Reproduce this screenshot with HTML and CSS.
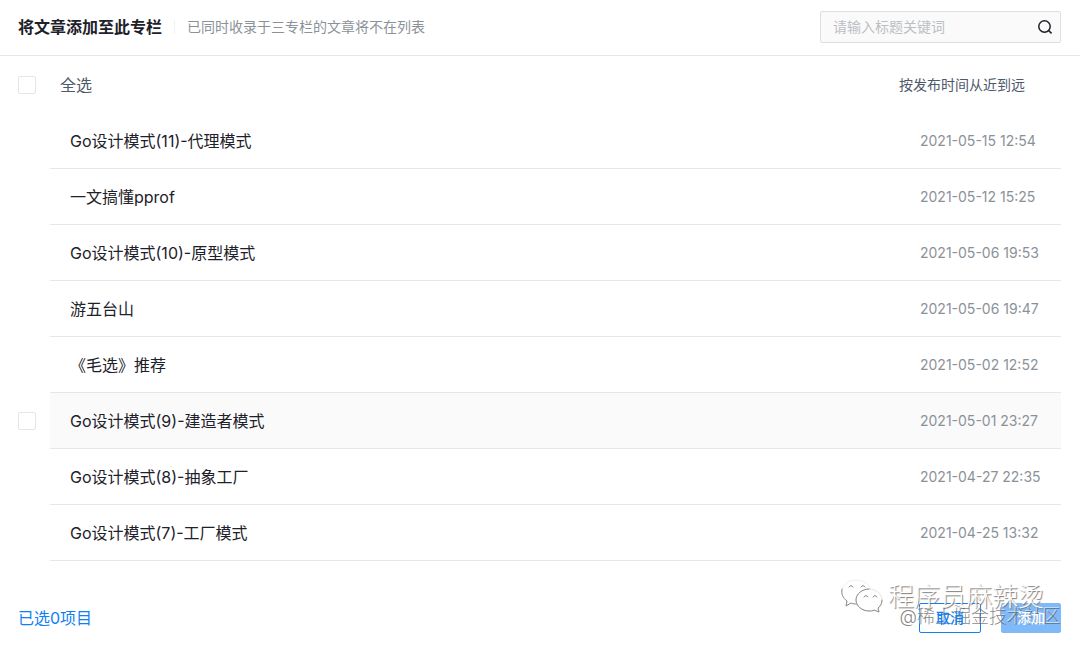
FILE: index.html
```html
<!DOCTYPE html>
<html lang="zh-CN">
<head>
<meta charset="utf-8">
<title>将文章添加至此专栏</title>
<link rel="stylesheet" href="styles.css">
</head>
<body>
<main class="dialog">
  <header class="header">
    <h1 class="title">将文章添加至此专栏</h1>
    <p class="hint">已同时收录于三专栏的文章将不在列表</p>
    <form class="search">
      <input class="search-input" type="text" placeholder="请输入标题关键词" aria-label="搜索文章">
      <button class="search-button" type="button" aria-label="搜索">
        <svg width="16" height="16" viewBox="0 0 16 16" fill="none" stroke="#1d2129" stroke-width="1.5"><circle cx="7.5" cy="7.5" r="5.7"/><path d="M11.6 11.6 14.6 14.4"/></svg>
      </button>
    </form>
  </header>
  <div class="toolbar">
    <label class="select-all"><input class="check" type="checkbox"><span>全选</span></label>
    <span class="sort">按发布时间从近到远</span>
  </div>
  <ul class="list">
    <li class="row"><div class="item"><span class="name">Go设计模式(11)-代理模式</span><time class="date">2021-05-15 12:54</time></div></li>
    <li class="row"><div class="item"><span class="name">一文搞懂pprof</span><time class="date">2021-05-12 15:25</time></div></li>
    <li class="row"><div class="item"><span class="name">Go设计模式(10)-原型模式</span><time class="date">2021-05-06 19:53</time></div></li>
    <li class="row"><div class="item"><span class="name">游五台山</span><time class="date">2021-05-06 19:47</time></div></li>
    <li class="row"><div class="item"><span class="name">《毛选》推荐</span><time class="date">2021-05-02 12:52</time></div></li>
    <li class="row row-active"><input class="check" type="checkbox" aria-label="选择 Go设计模式(9)-建造者模式"><div class="item"><span class="name">Go设计模式(9)-建造者模式</span><time class="date">2021-05-01 23:27</time></div></li>
    <li class="row"><div class="item"><span class="name">Go设计模式(8)-抽象工厂</span><time class="date">2021-04-27 22:35</time></div></li>
    <li class="row"><div class="item"><span class="name">Go设计模式(7)-工厂模式</span><time class="date">2021-04-25 13:32</time></div></li>
  </ul>
  <footer class="footer">
    <span class="count">已选0项目</span>
    <div class="actions">
      <button class="btn btn-cancel" type="button"><span class="btn-text">取消</span></button>
      <button class="btn btn-add" type="button"><span class="btn-text">添加</span></button>
      <div class="mark mark-account">
        <svg width="44" height="36" viewBox="0 0 44 36" fill="none" stroke="#8c8c8c" stroke-linecap="round" stroke-linejoin="round">
          <path fill="#fff" stroke="#f0f0f0" d="M16 1C8 1 2 6 2 13c0 4 2 7 5 9l-1 5 5-3c2 1 4 1 6 1C25 25 31 20 31 13S24 1 16 1Z"/>
          <path d="M2 10c-1 5 1 9 5 12l-1 5 5-3c2 1 4 1 6 1"/>
          <path fill="#fff" stroke="#e4e4e4" d="M29 10c-7 0-13 5-13 11s6 11 13 11c2 0 4 0 5-1l5 2-1-4c3-2 4-5 4-8 0-6-6-11-13-11Z"/>
          <path d="M29 10c-7 0-13 5-13 11s6 11 13 11c2 0 4 0 5-1l5 2-1-4c3-2 4-5 4-8"/>
          <path d="M9 8q2-3 4 0M21 8q2-3 4 0M24 18q2-3 4 0M33 18q2-3 4 0"/>
        </svg>
        <span>程序员麻辣烫</span>
      </div>
      <div class="mark mark-site">@稀土掘金技术社区</div>
    </div>
  </footer>
</main>
</body>
</html>
```

FILE: styles.css
```css
* { box-sizing: border-box; }
body {
  margin: 0;
  background: #fff;
  color: #1d2129;
  font-family: Inter, "Noto Sans CJK SC", sans-serif;
  font-size: 16px;
  line-height: 24px;
}
button, input { font: inherit; }
.header {
  display: flex;
  align-items: center;
  height: 56px;
  padding: 0 19px 2px 18px;
  border-bottom: 1px solid #e5e6eb;
}
.title { margin: 0; font-size: 16px; font-weight: 700; }
.hint {
  margin: 0 0 0 12px;
  padding-left: 12px;
  border-left: 1px solid #f0f1f3;
  color: #8a9299;
  font-size: 14px;
  line-height: 14px;
}
.search {
  display: flex;
  align-items: center;
  width: 241px;
  height: 32px;
  margin-left: auto;
  border: 1px solid #dcdfe4;
  border-radius: 2px;
  background: #fafafa;
}
.search-input {
  flex: 1;
  min-width: 0;
  padding: 0 12px;
  border: 0;
  outline: 0;
  background: transparent;
  font-size: 14px;
}
.search-input::placeholder { color: #bbbfc4; }
.search-button {
  display: flex;
  padding: 0 7px;
  border: 0;
  background: transparent;
}
.toolbar {
  display: flex;
  align-items: center;
  justify-content: space-between;
  height: 57px;
  padding: 0 55px 0 18px;
  color: #4e5969;
}
.select-all { display: flex; align-items: center; gap: 24px; }
.check {
  appearance: none;
  flex: none;
  width: 18px;
  height: 18px;
  margin: 0;
  border: 1px solid #e5e6eb;
  border-radius: 2px;
  background: #fff;
}
.sort { font-size: 14px; }
.list { margin: 0; padding: 0 19px 0 18px; list-style: none; }
.row { display: flex; align-items: center; gap: 14px; padding-left: 32px; }
.row-active { padding-left: 0; }
.item {
  display: flex;
  flex: 1;
  align-items: center;
  justify-content: space-between;
  height: 56px;
  padding: 0 19px 0 20px;
  border-bottom: 1px solid #e5e6eb;
}
.row-active .item { background: #fafafa; }
.date { width: 122px; color: #8a9299; font-size: 14px; white-space: nowrap; }
.footer {
  display: flex;
  align-items: center;
  justify-content: space-between;
  padding: 42px 19px 12px 18px;
}
.count { color: #1080f5; }
.actions { position: relative; display: flex; gap: 20px; }
.btn {
  width: 62px;
  height: 30px;
  padding: 0;
  border: 1px solid #1080f5;
  border-radius: 2px;
  background: #fff;
  color: #1080f5;
  font-size: 14px;
  font-weight: 500;
  line-height: 28px;
}
.btn-text { position: relative; z-index: 1; }
.btn-add { width: 60px; border-color: #80b9f8; background: #80b9f8; color: #fff; }
.mark { position: absolute; white-space: nowrap; pointer-events: none; }
.mark-account {
  right: 17px;
  bottom: 16px;
  display: flex;
  align-items: center;
  gap: 4px;
  color: #fff;
  font-size: 26px;
  font-weight: 300;
  line-height: 40px;
  text-shadow: 1px 1px 1px #777;
}
.mark-site {
  right: 0;
  bottom: 4px;
  color: rgba(80, 80, 80, 0.7);
  font-size: 18px;
  font-weight: 300;
  text-shadow: -1px -1px 0 rgba(255, 255, 255, 0.6);
}
```
